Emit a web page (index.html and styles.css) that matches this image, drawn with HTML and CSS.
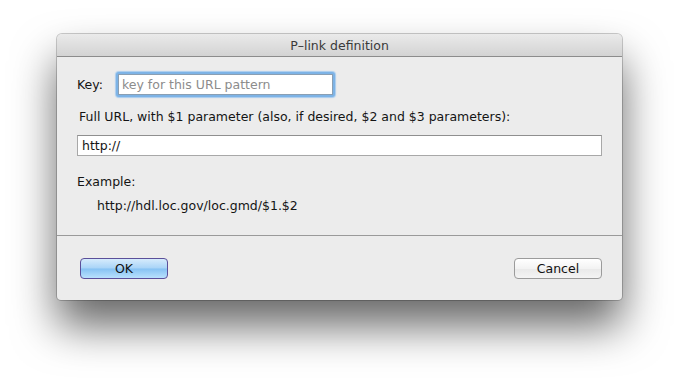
FILE: index.html
```html
<!DOCTYPE html>
<html>
<head>
<meta charset="utf-8">
<link rel="stylesheet" href="styles.css">
</head>
<body>
<div class="window">
  <div class="titlebar">P–link definition</div>
  <div class="content">
    <div class="key-row">
      <span class="label">Key:</span>
      <div class="focus-ring"><div class="key-input">key for this URL pattern</div></div>
    </div>
    <div class="url-label">Full URL, with $1 parameter (also, if desired, $2 and $3 parameters):</div>
    <div class="url-field">http://</div>
    <div class="example-label">Example:</div>
    <div class="example">http://hdl.loc.gov/loc.gmd/$1.$2</div>
  </div>
  <div class="separator"></div>
  <div class="buttons">
    <div class="btn btn-default">OK</div>
    <div class="btn">Cancel</div>
  </div>
</div>
</body>
</html>
```
FILE: styles.css
```css
html, body {
  margin: 0;
  padding: 0;
  background: #ffffff;
}
html {
  height: 100%;
}
body {
  box-sizing: border-box;
  min-height: 380px;
  padding: 34px 0 0 57px;
  font-family: "DejaVu Sans", "Liberation Sans", sans-serif;
  font-size: 12.5px;
  color: #141414;
}
.window {
  width: 565px;
  background: #ececec;
  border-radius: 5px 5px 4px 4px;
  box-shadow: 0 26px 44px rgba(0,0,0,0.6), 0 0 0 1px rgba(0,0,0,0.2);
  overflow: hidden;
}
.titlebar {
  height: 22px;
  line-height: 23px;
  text-align: center;
  color: #3a3a3a;
  font-size: 12.5px;
  background: linear-gradient(#eaeaea, #d3d3d3);
  border-bottom: 1px solid #8c8c8c;
}
.content {
  padding: 15px 0 0 20px;
}
.key-row {
  display: flex;
  align-items: center;
  height: 25px;
}
.label {
  width: 39px;
}
.focus-ring {
  width: 215px;
  height: 21px;
  border: 2px solid #7db3e6;
  border-radius: 3px;
  box-shadow: 0 0 1px 1px #a9cdef;
  background: #fff;
}
.key-input {
  height: 19px;
  line-height: 20px;
  border: 1px solid #8a9fb3;
  padding-left: 3px;
  color: #8c8c8c;
}
.url-label {
  margin-top: 12px;
  height: 16px;
  line-height: 16px;
  padding-left: 2px;
}
.url-field {
  margin-top: 10px;
  width: 519px;
  height: 19px;
  line-height: 20px;
  border: 1px solid #a8a8a8;
  border-top-color: #8f8f8f;
  background: #fff;
  padding-left: 4px;
}
.example-label {
  margin-top: 18px;
  height: 16px;
  line-height: 16px;
}
.example {
  margin-top: 8px;
  height: 16px;
  line-height: 16px;
  padding-left: 20px;
}
.separator {
  margin-top: 21px;
  height: 1px;
  background: #9a9a9a;
}
.buttons {
  display: flex;
  justify-content: space-between;
  padding: 22px 20px 21px 23px;
}
.btn {
  width: 86px;
  height: 19px;
  line-height: 19px;
  text-align: center;
  border: 1px solid #9b9b9b;
  border-radius: 4px;
  background: linear-gradient(#ffffff, #f3f3f3 50%, #e9e9e9 51%, #f4f4f4);
  color: #111;
}
.btn-default {
  border-color: #5b4f9a;
  background: linear-gradient(#d6ebfc, #a9d4f8 48%, #86c2f3 52%, #b9e1fd);
}
```
